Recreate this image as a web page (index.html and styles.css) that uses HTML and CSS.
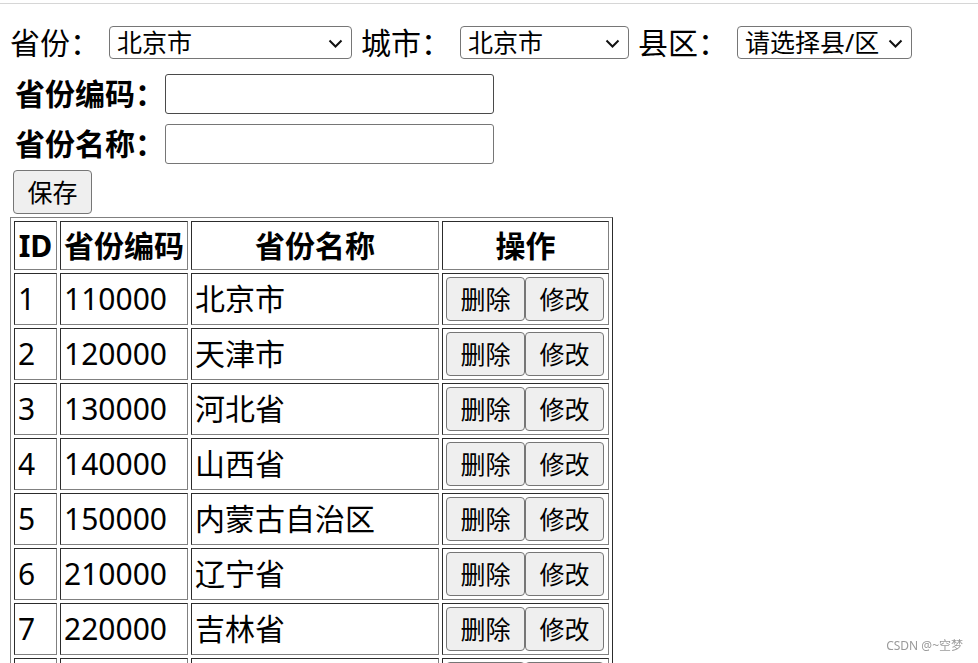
FILE: index.html
```html
<!DOCTYPE html>
<html lang="zh-CN">
<head>
<meta charset="utf-8">
<title>省份管理</title>
<link rel="stylesheet" href="styles.css">
</head>
<body>
<div class="page">
  <div class="topline"></div>
  <div class="region-row">
    <span class="lbl">省份：</span>
    <div class="sel sel-prov">
      <select><option>北京市</option></select>
      <svg class="chev" width="15" height="9" viewBox="0 0 15 9"><polyline points="1.5,1.5 7.5,7.5 13.5,1.5"/></svg>
    </div>
    <span class="lbl">城市：</span>
    <div class="sel sel-city">
      <select><option>北京市</option></select>
      <svg class="chev" width="15" height="9" viewBox="0 0 15 9"><polyline points="1.5,1.5 7.5,7.5 13.5,1.5"/></svg>
    </div>
    <span class="lbl">县区：</span>
    <div class="sel sel-county">
      <select><option>请选择县/区</option></select>
      <svg class="chev" width="15" height="9" viewBox="0 0 15 9"><polyline points="1.5,1.5 7.5,7.5 13.5,1.5"/></svg>
    </div>
  </div>
  <div class="field-row field-first">
    <span class="flbl">省份编码：</span>
    <input class="txt txt-hover" type="text">
  </div>
  <div class="field-row">
    <span class="flbl">省份名称：</span>
    <input class="txt" type="text">
  </div>
  <div class="actions">
    <button class="btn">保存</button>
  </div>
  <table class="grid">
    <thead>
      <tr>
        <th class="c-id">ID</th>
        <th class="c-code">省份编码</th>
        <th class="c-name">省份名称</th>
        <th class="c-op">操作</th>
      </tr>
    </thead>
    <tbody>
      <tr><td>1</td><td>110000</td><td>北京市</td><td><div class="ops"><button class="btn">删除</button><button class="btn">修改</button></div></td></tr>
      <tr><td>2</td><td>120000</td><td>天津市</td><td><div class="ops"><button class="btn">删除</button><button class="btn">修改</button></div></td></tr>
      <tr><td>3</td><td>130000</td><td>河北省</td><td><div class="ops"><button class="btn">删除</button><button class="btn">修改</button></div></td></tr>
      <tr><td>4</td><td>140000</td><td>山西省</td><td><div class="ops"><button class="btn">删除</button><button class="btn">修改</button></div></td></tr>
      <tr><td>5</td><td>150000</td><td>内蒙古自治区</td><td><div class="ops"><button class="btn">删除</button><button class="btn">修改</button></div></td></tr>
      <tr><td>6</td><td>210000</td><td>辽宁省</td><td><div class="ops"><button class="btn">删除</button><button class="btn">修改</button></div></td></tr>
      <tr><td>7</td><td>220000</td><td>吉林省</td><td><div class="ops"><button class="btn">删除</button><button class="btn">修改</button></div></td></tr>
      <tr><td>8</td><td>230000</td><td>黑龙江省</td><td><div class="ops"><button class="btn">删除</button><button class="btn">修改</button></div></td></tr>
    </tbody>
  </table>
</div>
<div class="watermark">CSDN @~空梦</div>
</body>
</html>
```
FILE: styles.css
```css
html, body {
  margin: 0;
  padding: 0;
  background: #ffffff;
}
body {
  font-family: "Noto Sans", "Noto Sans CJK SC", sans-serif;
  font-size: 30px;
  color: #000;
  overflow: hidden;
}
.page {
  padding: 3px 0 0 10px;
}
.topline {
  height: 1px;
  background: #d6d6d6;
  margin-left: -10px;
}
.region-row {
  display: flex;
  align-items: center;
  gap: 9px;
  margin-top: 22px;
  height: 33px;
}
.lbl {
  display: block;
  width: 90px;
  line-height: 33px;
  white-space: nowrap;
}
.sel {
  position: relative;
  height: 33px;
}
.sel select {
  display: block;
  appearance: none;
  -webkit-appearance: none;
  box-sizing: border-box;
  height: 33px;
  width: 100%;
  margin: 0;
  padding: 0 0 0 7px;
  border: 1px solid #767676;
  border-radius: 4px;
  background: #fff;
  color: #000;
  font-family: "Noto Sans", "Noto Sans CJK SC", sans-serif;
  font-size: 25px;
  line-height: 31px;
}
.sel-prov { width: 243px; }
.sel-city { width: 169px; }
.sel-county { width: 175px; }
.chev {
  position: absolute;
  right: 9px;
  top: 13px;
  pointer-events: none;
}
.chev polyline {
  fill: none;
  stroke: #111;
  stroke-width: 2;
}
.field-row {
  display: flex;
  align-items: center;
  padding-left: 5px;
  margin-top: 10px;
}
.field-first {
  margin-top: 15px;
}
.flbl {
  display: block;
  width: 150px;
  font-weight: bold;
  line-height: 40px;
  white-space: nowrap;
}
.txt {
  display: block;
  box-sizing: border-box;
  width: 329px;
  height: 40px;
  margin: 0;
  border: 1px solid #767676;
  border-radius: 3px;
  background: #fff;
  padding: 0 4px;
  font-size: 25px;
}
.txt-hover {
  border-color: #4a4a4a;
}
.actions {
  margin-top: 6px;
  padding-left: 3px;
  height: 44px;
}
.btn {
  box-sizing: border-box;
  width: 79px;
  height: 44px;
  margin: 0;
  padding: 0;
  border: 1px solid #767676;
  border-radius: 4px;
  background: #efefef;
  color: #000;
  font-family: "Noto Sans", "Noto Sans CJK SC", sans-serif;
  font-size: 25px;
  line-height: 42px;
}
.grid {
  margin-top: 3px;
  border: 1px outset grey;
  border-spacing: 3px;
  font-size: 30px;
}
.grid th,
.grid td {
  border: 1px inset grey;
  padding: 3px;
  box-sizing: border-box;
}
.grid th {
  font-weight: bold;
  line-height: 41px;
  text-align: center;
  white-space: nowrap;
}
.grid td {
  text-align: left;
  white-space: nowrap;
  line-height: 44px;
  height: 52px;
}
.c-id { width: 43px; }
.c-code { width: 127px; }
.c-name { width: 248px; }
.c-op { width: 167px; }
.ops {
  display: flex;
  gap: 0;
}
.watermark {
  position: fixed;
  right: 15px;
  bottom: 9px;
  font-family: "Noto Sans", "Noto Sans CJK SC", sans-serif;
  font-size: 12px;
  color: #9a9a9a;
}
```
